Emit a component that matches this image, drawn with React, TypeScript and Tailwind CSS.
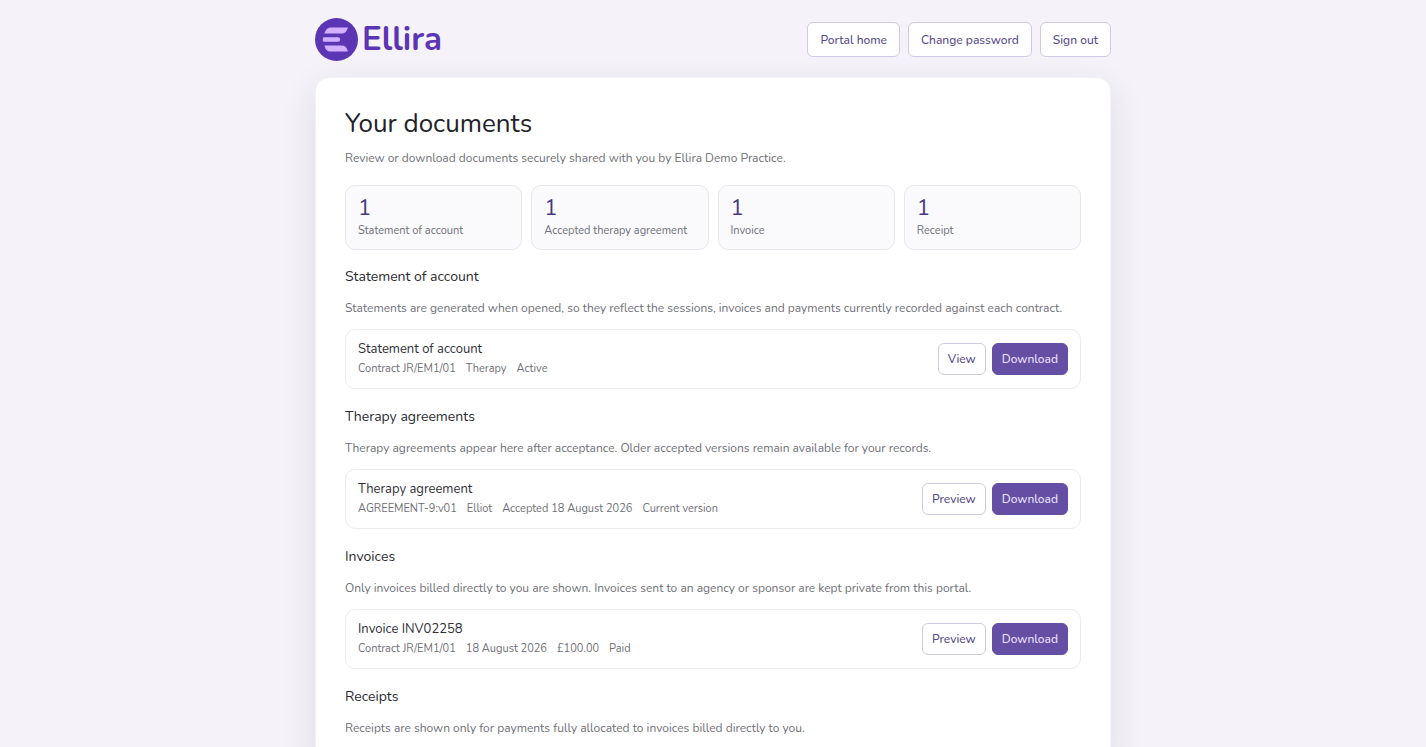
type Doc = { title: string; meta: string[]; view: string }
type Section = { heading: string; text: string; docs: Doc[] }

const stats = [
    { count: 1, label: "Statement of account" },
    { count: 1, label: "Accepted therapy agreement" },
    { count: 1, label: "Invoice" },
    { count: 1, label: "Receipt" },
]

const sections: Section[] = [
    {
        heading: "Statement of account",
        text: "Statements are generated when opened, so they reflect the sessions, invoices and payments currently recorded against each contract.",
        docs: [{ title: "Statement of account", meta: ["Contract JR/EM1/01", "Therapy", "Active"], view: "View" }],
    },
    {
        heading: "Therapy agreements",
        text: "Therapy agreements appear here after acceptance. Older accepted versions remain available for your records.",
        docs: [{ title: "Therapy agreement", meta: ["AGREEMENT-9:v01", "Elliot", "Accepted 18 August 2026", "Current version"], view: "Preview" }],
    },
    {
        heading: "Invoices",
        text: "Only invoices billed directly to you are shown. Invoices sent to an agency or sponsor are kept private from this portal.",
        docs: [{ title: "Invoice INV02258", meta: ["Contract JR/EM1/01", "18 August 2026", "£100.00", "Paid"], view: "Preview" }],
    },
    {
        heading: "Receipts",
        text: "Receipts are shown only for payments fully allocated to invoices billed directly to you.",
        docs: [],
    },
]

function Logo() {
    return (
        <a href="#" className="flex items-center gap-1">
            <svg viewBox="0 0 43 43" className="size-[43px]" aria-hidden="true">
                <circle cx="21.5" cy="21.5" r="21.5" fill="#5c35b5" />
                <path d="M9.500 15.600c.6-3.600 3-6.200 6.500-6.200h16.200c.5 0 .7.4.5.9-1 3.400-2.800 5.300-6 5.300z" fill="#d3b0ff" />
                <path d="M8.300 19.200h14.600a2.300 2.300 0 0 1 0 4.600H8.300c-.6-1.500-.6-3.100 0-4.600z" fill="#d3b0ff" />
                <path d="M9.500 27.400h17.200c3.200 0 5 1.900 6 5.300.2.500 0 .9-.5.9H16c-3.500 0-5.900-2.600-6.500-6.200z" fill="#d3b0ff" />
            </svg>
            <span className="text-[33px] leading-[43px] font-bold text-[#5c35b5]">Ellira</span>
        </a>
    )
}

function NavButton({ label }: { label: string }) {
    return (
        <button type="button" className="h-[35px] rounded-md border border-[#cfcae6] bg-white px-3 text-[12px] font-medium text-[#574b8c]">
            {label}
        </button>
    )
}

function DocRow({ doc }: { doc: Doc }) {
    return (
        <div className="mt-[11px] flex items-center justify-between rounded-[10px] border border-[#ececf1] px-3 py-[10px]">
            <div>
                <h3 className="text-[13px] leading-[19px] text-[#2f3037]">{doc.title}</h3>
                <p className="flex gap-[10px] text-[11px] leading-[19px] text-[#6f7077]">
                    {doc.meta.map((item) => (
                        <span key={item}>{item}</span>
                    ))}
                </p>
            </div>
            <div className="flex gap-[6px]">
                <button type="button" className="h-8 rounded-md border border-[#cfcae6] bg-white px-[9px] text-[12px] font-medium text-[#574b8c]">
                    {doc.view}
                </button>
                <button type="button" className="h-8 rounded-md border border-[#654fa4] bg-[#654fa4] px-[9px] text-[12px] font-medium text-[#e9e0ff]">
                    Download
                </button>
            </div>
        </div>
    )
}

export default function App() {
    return (
        <div className="min-h-screen bg-[#f5f3f9] font-[Nunito,'Open_Sans',sans-serif]">
            <div className="mx-auto max-w-[796px]">
                <header className="flex items-center justify-between pt-[18px] pb-4">
                    <Logo />
                    <nav className="flex gap-2">
                        <NavButton label="Portal home" />
                        <NavButton label="Change password" />
                        <NavButton label="Sign out" />
                    </nav>
                </header>
                <main className="rounded-[14px] border border-[#f3f1f7] bg-white p-[29px] shadow-[0_12px_36px_rgba(35,30,60,0.11)]">
                    <h1 className="text-[26px] leading-[33px] text-[#22232a]">Your documents</h1>
                    <p className="mt-2 text-[12px] leading-5 text-[#6f7077]">
                        Review or download documents securely shared with you by Ellira Demo Practice.
                    </p>
                    <div className="mt-[17px] grid grid-cols-4 gap-[9px]">
                        {stats.map((stat) => (
                            <div key={stat.label} className="rounded-[10px] border border-[#e7e7ec] bg-[#fafafd] px-3 py-[9px]">
                                <div className="text-[22px] leading-[26px] text-[#473881]">{stat.count}</div>
                                <div className="text-[11px] leading-[19px] text-[#6f7077]">{stat.label}</div>
                            </div>
                        ))}
                    </div>
                    <div className="mt-[15px] flex flex-col gap-4">
                        {sections.map((section) => (
                            <section key={section.heading}>
                                <h2 className="text-[14px] leading-6 text-[#2a2b32]">{section.heading}</h2>
                                <p className="mt-[9px] text-[12px] leading-5 text-[#6f7077]">{section.text}</p>
                                {section.docs.map((doc) => (
                                    <DocRow key={doc.title} doc={doc} />
                                ))}
                            </section>
                        ))}
                    </div>
                </main>
            </div>
        </div>
    )
}
